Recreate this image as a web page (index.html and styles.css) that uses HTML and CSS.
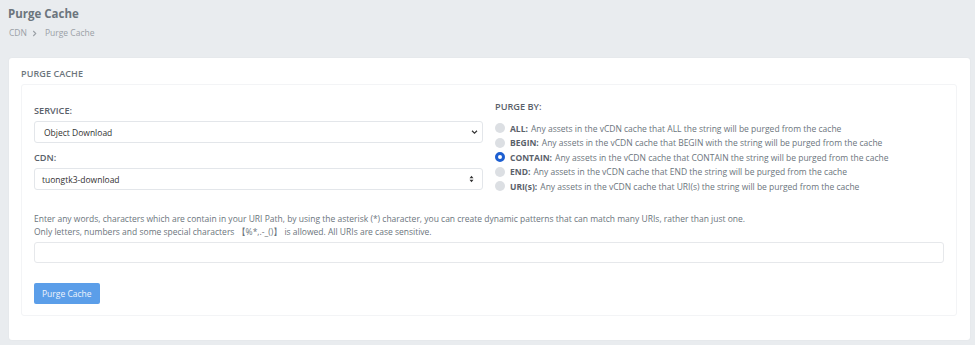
FILE: index.html
```html
<!DOCTYPE html>
<html lang="en">
<head>
<meta charset="utf-8">
<title>Purge Cache</title>
<link rel="stylesheet" href="styles.css">
</head>
<body>
<div class="page">
  <div class="page-head">
    <h1 class="page-title">Purge Cache</h1>
    <nav class="crumbs">
      <span>CDN</span>
      <svg class="crumb-sep" viewBox="0 0 6 8" width="5" height="7"><path d="M1.5 1 L4.5 4 L1.5 7" fill="none" stroke="#9aa0a6" stroke-width="1.3"/></svg>
      <span>Purge Cache</span>
    </nav>
  </div>

  <section class="card">
    <h2 class="card-title">PURGE CACHE</h2>
    <div class="inner">
      <div class="grid">
        <div class="col-left">
          <label class="label">SERVICE:</label>
          <div class="select select-a">
            <span class="select-text">Object Download</span>
            <svg class="select-icon icon-chevron" viewBox="0 0 8 6" width="7" height="5"><path d="M1 1.5 L4 4.5 L7 1.5" fill="none" stroke="#333" stroke-width="1.4"/></svg>
          </div>
          <label class="label label-cdn">CDN:</label>
          <div class="select select-b">
            <span class="select-text">tuongtk3-download</span>
            <svg class="select-icon icon-updown" viewBox="0 0 6 10" width="5" height="8"><path d="M0.5 4 L3 1 L5.5 4 Z M0.5 6 L3 9 L5.5 6 Z" fill="#333"/></svg>
          </div>
        </div>
        <div class="col-right">
          <div class="label label-purge">PURGE BY:</div>
          <ul class="radios">
            <li><span class="radio"></span><b>ALL:</b> Any assets in the vCDN cache that ALL the string will be purged from the cache</li>
            <li><span class="radio"></span><b>BEGIN:</b> Any assets in the vCDN cache that BEGIN with the string will be purged from the cache</li>
            <li><span class="radio checked"></span><b>CONTAIN:</b> Any assets in the vCDN cache that CONTAIN the string will be purged from the cache</li>
            <li><span class="radio"></span><b>END:</b> Any assets in the vCDN cache that END the string will be purged from the cache</li>
            <li><span class="radio"></span><b>URI(s):</b> Any assets in the vCDN cache that URI(s) the string will be purged from the cache</li>
          </ul>
        </div>
      </div>
      <p class="help">Enter any words, characters which are contain in your URI Path, by using the asterisk (*) character, you can create dynamic patterns that can match many URIs, rather than just one.<br>Only letters, numbers and some special characters 【%*,.-_()】 is allowed. All URIs are case sensitive.</p>
      <div class="input"></div>
      <button class="btn">Purge Cache</button>
    </div>
  </section>
</div>
</body>
</html>
```

FILE: styles.css
```css
* { box-sizing: border-box; }
html, body { margin: 0; padding: 0; }
body {
  background: #e9ecef;
  font-family: "Open Sans", "Noto Sans", sans-serif;
  color: #6c757d;
  width: 975px;
  height: 345px;
  overflow: hidden;
}
.page { padding: 0 5px 0 9px; }
.page-head { padding: 6px 0 0 0; height: 58px; }
.page-title {
  margin: 0 0 0 -1px;
  font-size: 11.5px;
  line-height: 16px;
  font-weight: 700;
  color: #6c757d;
}
.crumbs {
  margin-top: 4px;
  display: flex;
  align-items: center;
  font-size: 8.5px;
  line-height: 14px;
  color: #9aa0a6;
}
.crumb-sep { margin: 0 8px 0 5px; }
.card {
  background: #fff;
  border-radius: 3px;
  box-shadow: 0 0 2px rgba(0,0,0,0.05);
  padding: 9px 13px 24px 12px;
  height: 282px;
}
.card-title {
  margin: 0 0 3px 0;
  font-size: 9px;
  line-height: 14px;
  font-weight: 600;
  color: #6c757d;
  letter-spacing: 0.1px;
}
.inner {
  border: 1px solid #f3f4f6;
  border-radius: 3px;
  padding: 15px 12px 11px 12px;
}
.grid {
  display: grid;
  grid-template-columns: 449px 449px;
  column-gap: 12px;
}
.col-left { padding-top: 4px; }
.label {
  display: block;
  font-size: 9.2px;
  line-height: 14px;
  font-weight: 600;
  color: #5a616a;
  margin-bottom: 3px;
}
.label-cdn { margin-top: 8px; }
.label-purge { margin-bottom: 7px; }
.select {
  position: relative;
  height: 22px;
  border: 1px solid #e3e6ea;
  border-radius: 3px;
  display: flex;
  align-items: center;
  font-size: 8.5px;
  color: #333;
}
.select-a { padding-left: 9px; }
.select-b { padding-left: 7px; }
.select-icon { position: absolute; top: 50%; transform: translateY(-50%); }
.icon-chevron { right: 4px; }
.icon-updown { right: 8px; }
.radios { list-style: none; margin: 0; padding: 0; }
.radios li {
  display: flex;
  align-items: center;
  height: 14.5px;
  font-size: 8.5px;
  color: #6c757d;
  white-space: nowrap;
}
.radios b { font-weight: 700; color: #5a616a; margin-right: 3px; }
.radio {
  width: 10px;
  height: 10px;
  border-radius: 50%;
  background: #dcdfe3;
  margin-right: 5px;
  flex: none;
}
.radio.checked {
  background: #fff;
  border: 3px solid #1d5fd1;
}
.help {
  margin: 18px 0 4px 0;
  font-size: 8.5px;
  line-height: 13px;
  color: #6c757d;
}
.input {
  height: 21px;
  border: 1px solid #e6e8eb;
  border-radius: 3px;
}
.btn {
  margin-top: 20px;
  height: 21px;
  padding: 0 8px;
  border: none;
  border-radius: 2px;
  background: #5b9ee9;
  color: #eef4fc;
  font-family: "Open Sans", "Noto Sans", sans-serif;
  font-size: 8.5px;
  display: block;
}
```
